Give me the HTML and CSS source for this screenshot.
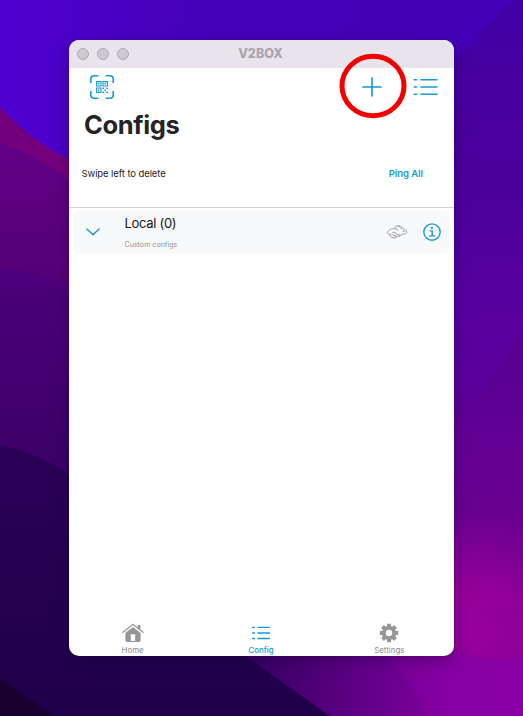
FILE: index.html
```
<!DOCTYPE html>
<html lang="en">
<head>
<meta charset="utf-8">
<title>V2BOX</title>
<link rel="stylesheet" href="styles.css">
</head>
<body>
<svg class="wallpaper" viewBox="0 0 523 716" aria-hidden="true">
  <defs>
    <linearGradient id="sky" x1="0" y1="0" x2="1" y2="0"><stop offset="0" stop-color="#4f00d0"/><stop offset=".4" stop-color="#4600b8"/><stop offset="1" stop-color="#4400b5"/></linearGradient>
    <linearGradient id="left" x1="0" y1="143" x2="0" y2="460" gradientUnits="userSpaceOnUse"><stop offset="0" stop-color="#620087"/><stop offset=".4" stop-color="#560078"/><stop offset="1" stop-color="#3d006b"/></linearGradient>
    <linearGradient id="left2" x1="0" y1="268" x2="0" y2="470" gradientUnits="userSpaceOnUse"><stop offset="0" stop-color="#4d007c"/><stop offset="1" stop-color="#3b0066"/></linearGradient>
    <linearGradient id="right" x1="0" y1="0" x2="0" y2="420" gradientUnits="userSpaceOnUse"><stop offset="0" stop-color="#4300a6"/><stop offset=".4" stop-color="#4b009c"/><stop offset=".8" stop-color="#59009f"/><stop offset="1" stop-color="#5e0098"/></linearGradient>
    <linearGradient id="right2" x1="0" y1="325" x2="0" y2="716" gradientUnits="userSpaceOnUse"><stop offset="0" stop-color="#540090"/><stop offset=".22" stop-color="#5f0094"/><stop offset=".55" stop-color="#6c0090"/><stop offset="1" stop-color="#80009d"/></linearGradient>
    <radialGradient id="glow" cx="475" cy="630" r="120" gradientUnits="userSpaceOnUse"><stop offset="0" stop-color="#a0009c"/><stop offset=".4" stop-color="#960099" stop-opacity=".85"/><stop offset="1" stop-color="#8b0098" stop-opacity="0"/></radialGradient>
    <linearGradient id="bottom" x1="245" y1="0" x2="523" y2="0" gradientUnits="userSpaceOnUse"><stop offset="0" stop-color="#35005f"/><stop offset=".45" stop-color="#63008a"/><stop offset=".75" stop-color="#8600a1"/><stop offset="1" stop-color="#8b00a2"/></linearGradient>
    <linearGradient id="dark" x1="0" y1="445" x2="0" y2="716" gradientUnits="userSpaceOnUse"><stop offset="0" stop-color="#2b0058"/><stop offset="1" stop-color="#20004a"/></linearGradient>
  </defs>
  <rect width="523" height="716" fill="url(#sky)"/>
  <path d="M0 107Q32 142 69 159L200 200V716H0Z" fill="#74007d"/>
  <path d="M0 143Q40 156 69 180L200 240V716H0Z" fill="url(#left)"/>
  <path d="M0 268Q40 272 69 284L200 330V716H0Z" fill="url(#left2)"/>
  <path d="M523 0H515C490 18 480 40 454 60L300 180V716H523Z" fill="url(#right)"/>
  <path d="M523 325Q500 378 466 404L300 500V716H523Z" fill="url(#right2)"/>
  <rect x="340" y="490" width="183" height="226" fill="url(#glow)"/>
  <path d="M440 607L523 606V716H440Z" fill="#8500a0" opacity=".22"/>
  <path d="M200 650H454Q490 665 523 655V716H200Z" fill="url(#bottom)"/>
  <path d="M380 650L410 682L426 716H523V656Q490 665 454 650Z" fill="#8b00aa" opacity=".3"/>
  <path d="M0 445Q42 454 69 475L245 656L330 716H0Z" fill="url(#dark)"/>
  <path d="M0 678L53 716H0Z" fill="#17002f"/>
</svg>

<main class="window">
  <header class="titlebar">
    <div class="lights"><i></i><i></i><i></i></div>
    <div class="app-name">V2BOX</div>
  </header>

  <div class="toolbar">
    <svg class="scan" viewBox="0 0 24 24">
      <path class="line" d="M.8 7.5V4.3Q.8.8 4.3.8h3.5M16.2.8h3.5q3.5 0 3.5 3.5v3.2M23.2 16.5v3.2q0 3.5-3.5 3.5h-3.5M7.8 23.2H4.3q-3.5 0-3.5-3.5v-3.2"/>
      <path class="qr" d="M6.6 6.6h4.4V11H6.6zM13 6.6h4.4V11H13zM6.6 13H11v4.4H6.6z"/>
      <path class="fill" d="M8.1 8.1h1.4v1.4H8.1zM14.5 8.1h1.4v1.4h-1.4zM8.1 14.5h1.4v1.4H8.1zM12.5 12.5H14V14h-1.5zM16.4 12.5h1.5V14h-1.5zM14.5 14.5H16V16h-1.5zM12.5 16.4H14v1.5h-1.5zM16.4 16.4h1.5v1.5h-1.5z"/>
    </svg>
    <div class="add">
      <svg class="plus" viewBox="0 0 20 20"><path class="line" d="M10 .9v18.2M.9 10h18.2"/></svg>
      <svg class="marker" viewBox="0 0 68 66"><ellipse cx="34" cy="33" rx="31" ry="29.7"/></svg>
    </div>
    <svg class="list" viewBox="0 0 25 18"><path class="line" d="M8 1.7h16M8 9h16M8 16.2h16"/><path class="line" d="M1.3 1.7h2.2M1.3 9h2.2M1.3 16.2h2.2"/></svg>
  </div>

  <h1>Configs</h1>

  <div class="actions">
    <span class="hint">Swipe left to delete</span>
    <a class="ping">Ping All</a>
  </div>

  <section class="group">
    <svg class="chevron" viewBox="0 0 14 8"><path class="line" d="M.9.9L7 6.8 13.1.9"/></svg>
    <div class="labels">
      <div class="name">Local (0)</div>
      <div class="note">Custom configs</div>
    </div>
    <svg class="hare" viewBox="0 0 22 16">
      <path d="M12.2 6.2C9.8 5 8.4 3 9.6 2.2c1.7-1 4.4 1.2 6 2.8M11.6 1.9c2-.9 4.4.6 5.2 2.8 2.2.5 4 2.2 4 3.5 0 1.5-2 2-3.8 1.7-1 .9-2.2 1.4-3.2 1.8M9.8 4.8C6.5 4.1 4 5.2 2.6 6.8 1.2 7.4.8 8.5 1.5 9.3c.8.9 2 1 3 1.1M6.6 8.3c1.8-.4 3.2.4 4.1 1.9l2.6.6c1.2.4 1.5 1.5.3 1.6l-3.6-.2-3.3-1.5M5 10.6c-1.5.1-1.9 1.5-.7 1.9l3.3 1.4h2.2c.9-.4.5-1.2-.5-1.6"/>
      <circle cx="17.5" cy="7.2" r=".45"/>
    </svg>
    <svg class="info" viewBox="0 0 18 18"><circle class="line" cx="9" cy="9" r="8.2"/><circle class="fill" cx="8.9" cy="4.9" r="1.15"/><path class="line" d="M7.1 7.8h2.1v5M6.7 12.9h4.9"/></svg>
  </section>

  <nav class="tabs">
    <a class="tab">
      <svg viewBox="0 0 22 20"><path class="roof" d="M1 9.2L11 1.3l10 7.9"/><path class="fill" d="M15.9 1.9h2.5v5l-2.5-2zM11 4.1l7.6 6v7.2q0 1.7-1.7 1.7H5.1q-1.7 0-1.7-1.7v-7.2zM8.8 11.2v6.7h4.4v-6.7z" fill-rule="evenodd"/></svg>
      <span>Home</span>
    </a>
    <a class="tab active">
      <svg viewBox="0 0 22 20"><path class="line" d="M8 4.4h11.5M8 10h11.5M8 15.5h11.5"/><path class="line" d="M2.7 4.4h1.7M2.7 10h1.7M2.7 15.5h1.7"/></svg>
      <span>Config</span>
    </a>
    <a class="tab">
      <svg viewBox="0 0 22 20"><circle class="gear" cx="11" cy="10" r="5.2"/><path class="teeth" d="M11 .8v3M11 16.2v3M1.8 10h3M17.2 10h3M4.5 3.5l2.1 2.1M15.4 14.4l2.1 2.1M17.5 3.5l-2.1 2.1M6.6 14.4l-2.1 2.1"/></svg>
      <span>Settings</span>
    </a>
  </nav>
</main>
</body>
</html>
```

FILE: styles.css
```
* { box-sizing: border-box; }
body {
  margin: 0;
  width: 523px;
  height: 716px;
  padding: 40px 69px 60px;
  overflow: hidden;
  background: #380062;
  font-family: Inter, "Liberation Sans", sans-serif;
  color: #242426;
}
svg { display: block; flex: none; fill: none; }
.wallpaper { position: absolute; inset: 0; width: 523px; height: 716px; z-index: -1; }
.window {
  width: 385px;
  height: 616px;
  display: flex;
  flex-direction: column;
  overflow: hidden;
  border-radius: 10px;
  background: #fff;
  box-shadow: 0 5px 16px rgba(10, 0, 35, .3);
}
.titlebar {
  height: 28px;
  flex: none;
  display: grid;
  grid-template-columns: 1fr auto 1fr;
  align-items: center;
  background: #e9e4eb;
}
.lights { display: flex; gap: 8px; padding-left: 8px; }
.lights i { width: 12px; height: 12px; border: 1px solid #aea9b1; border-radius: 50%; background: #cec9d0; }
.app-name { margin-left: -2px; font-size: 12.6px; font-weight: 800; line-height: 28px; color: #aaa5ad; }
.toolbar { height: 38px; flex: none; display: flex; align-items: center; padding: 0 16px 0 20px; }
.line { stroke: #1698d5; stroke-width: 1.6; stroke-linecap: round; stroke-linejoin: round; }
.fill { fill: #1698d5; }
.scan { width: 24px; height: 24px; margin-left: .5px; }
.qr { stroke: #1698d5; stroke-width: 1.1; }
.add { position: relative; margin-left: auto; margin-right: 31px; }
.plus { width: 20px; height: 20px; }
.marker { position: absolute; left: -23px; top: -24px; width: 68px; height: 66px; }
.marker ellipse { stroke: #f50000; stroke-width: 5; }
.list { width: 25px; height: 18px; }
h1 { margin: 0 0 0 15px; height: 38px; flex: none; font-size: 25.5px; font-weight: 700; line-height: 38px; letter-spacing: -.36px; }
.actions {
  height: 64px;
  flex: none;
  display: flex;
  justify-content: space-between;
  padding: 0 31px 0 12.5px;
  border-bottom: 1px solid #d3d3d5;
  font-size: 9.5px;
  line-height: 60px;
}
.hint { letter-spacing: -.1px; }
.ping { color: #1698d5; font-weight: 600; letter-spacing: -.05px; }
.group {
  height: 44px;
  flex: none;
  display: flex;
  align-items: center;
  margin: 2px 4px 0;
  padding: 0 9px 0 13px;
  border-radius: 8px;
  background: #f8f9fb;
}
.chevron { width: 14px; height: 8px; }
.chevron .line { stroke-width: 1.4; }
.labels { margin-left: 24.5px; padding-top: 1px; }
.name { font-size: 13px; line-height: 20px; letter-spacing: -.3px; color: #151516; }
.note { margin-top: 4px; font-size: 7.1px; line-height: 16px; color: #929295; }
.hare { width: 22px; height: 16px; margin-left: auto; margin-right: 15px; stroke: #a0a0a3; stroke-width: 1; stroke-linecap: round; stroke-linejoin: round; }
.info { width: 18px; height: 18px; }
.info .line { stroke-width: 1.35; }
.tabs { display: grid; grid-template-columns: repeat(3, 1fr); height: 35px; margin-top: auto; }
.tab { display: flex; flex-direction: column; align-items: center; font-size: 7.9px; color: #8c8c90; }
.tab svg { width: 22px; height: 20px; margin-top: 2px; margin-right: 1px; }
.tab span { line-height: 12px; margin-top: 1px; margin-right: 1px; }
.tab .fill { fill: #969696; }
.tab.active { color: #1698d5; font-weight: 500; }
.tab.active .line { stroke-width: 1.4; }
.roof { stroke: #969696; stroke-width: 1.4; stroke-linecap: round; }
.gear, .teeth { stroke: #969696; stroke-width: 4; }
```
